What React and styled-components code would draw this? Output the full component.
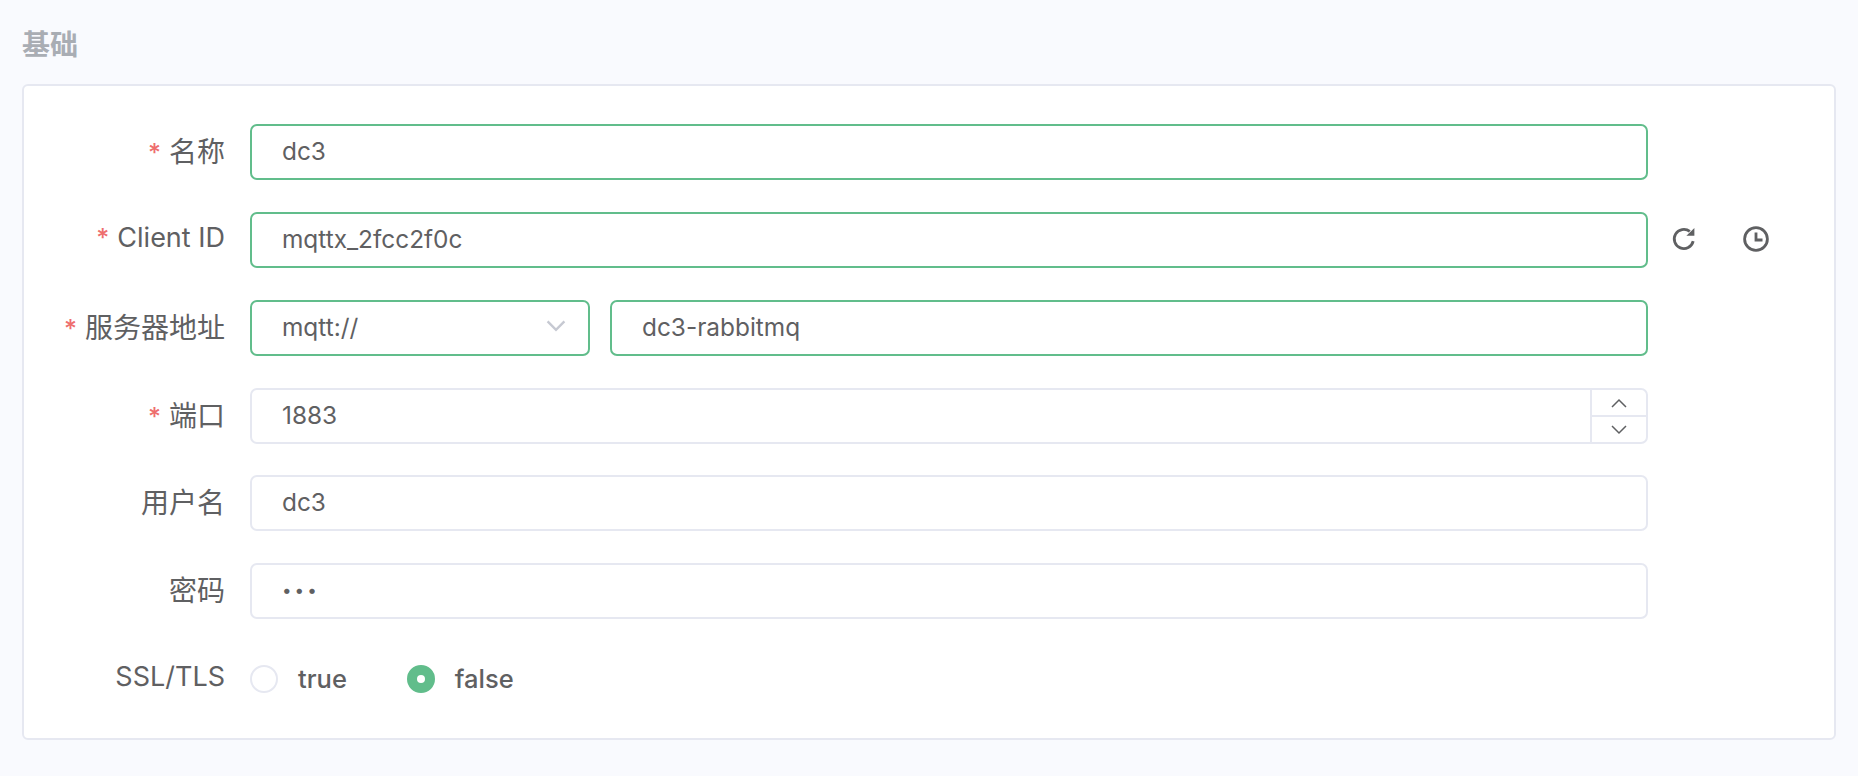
import React from "react";
import styled, { createGlobalStyle } from "styled-components";

const GREEN = "#61bd8b";
const LINE = "#e6e8f1";
const TEXT = "#5f6062";

const GlobalStyle = createGlobalStyle`
  html, body {
    margin: 0;
    height: 100%;
    overflow: hidden;
    background: #f9fafe;
  }
  body, input {
    font-family: Inter, "Noto Sans CJK SC", sans-serif;
  }
`;

const Page = styled.div`
  box-sizing: border-box;
  height: 776px;
  padding: 27px 22px 0;
`;

const Title = styled.h2`
  margin: 0 0 21px;
  font-size: 28px;
  line-height: 36px;
  font-weight: 700;
  color: #a9adb4;
`;

const Card = styled.section`
  box-sizing: border-box;
  height: 656px;
  padding: 38px 0 0;
  background: #fff;
  border: 2px solid ${LINE};
  border-radius: 6px;
`;

const Row = styled.div`
  display: flex;
  align-items: center;
  height: 56px;
  margin-bottom: ${(p) => p.$gap ?? 32}px;
`;

const Label = styled.label`
  flex: 0 0 201px;
  box-sizing: border-box;
  padding-bottom: 5px;
  text-align: right;
  font-size: ${(p) => (p.$latin ? 27 : 28)}px;
  color: ${TEXT};
  white-space: nowrap;
`;

const Star = styled.span`
  margin-right: 8px;
  font-size: 25px;
  font-weight: 500;
  color: #ee6e6e;
`;

const Control = styled.div`
  flex: 0 0 1398px;
  margin-left: 25px;
  display: flex;
  gap: 20px;
`;

const TextInput = styled.input`
  box-sizing: border-box;
  flex: 1;
  min-width: 0;
  height: 56px;
  padding: 0 30px 3px;
  font-size: ${(p) => (p.type === "password" ? 17 : 24.4)}px;
  letter-spacing: ${(p) => (p.type === "password" ? "3px" : "normal")};
  color: ${TEXT};
  background: #fff;
  border: 2px solid ${(p) => (p.$valid ? GREEN : LINE)};
  border-radius: 7px;
  outline: none;
`;

const SelectBox = styled.div`
  box-sizing: border-box;
  flex: 0 0 340px;
  height: 56px;
  padding: 0 20px 3px 30px;
  display: flex;
  align-items: center;
  justify-content: space-between;
  font-size: 24.4px;
  color: ${TEXT};
  border: 2px solid ${GREEN};
  border-radius: 7px;
`;

const NumberBox = styled.div`
  position: relative;
  flex: 1;
  display: flex;
`;

const Stepper = styled.div`
  position: absolute;
  top: 2px;
  right: 2px;
  bottom: 2px;
  width: 54px;
  display: flex;
  flex-direction: column;
  border-left: 2px solid ${LINE};
`;

const StepButton = styled.button`
  flex: 1;
  padding: 0;
  display: flex;
  align-items: center;
  justify-content: center;
  background: none;
  border: none;
  & + & {
    border-top: 2px solid ${LINE};
  }
`;

const IconActions = styled.div`
  display: flex;
  align-items: center;
  margin: -3px 0 0 23px;
  gap: 46px;
`;

const IconButton = styled.button`
  width: 26px;
  height: 26px;
  padding: 0;
  display: flex;
  background: none;
  border: none;
  color: ${TEXT};
`;

const RadioGroup = styled.div`
  display: flex;
  align-items: center;
  gap: 60px;
`;

const RadioOption = styled.span`
  display: flex;
  align-items: center;
  gap: 20px;
  font-size: 25.5px;
  font-weight: 500;
  color: ${TEXT};
`;

const RadioText = styled.span`
  padding-bottom: 2px;
`;

const RadioDot = styled.span`
  box-sizing: border-box;
  width: 28px;
  height: 28px;
  display: flex;
  align-items: center;
  justify-content: center;
  border-radius: 50%;
  background: ${(p) => (p.$on ? GREEN : "#fff")};
  border: 2px solid ${(p) => (p.$on ? GREEN : LINE)};
  &::after {
    content: "";
    display: ${(p) => (p.$on ? "block" : "none")};
    width: 8px;
    height: 8px;
    border-radius: 50%;
    background: #fff;
  }
`;

const Chevron = ({ up, size = 24, color = TEXT, width = 1.6 }) => (
  <svg width={size} height={size * 0.6} viewBox="0 0 20 12" fill="none" stroke={color} strokeWidth={width}>
    <path d={up ? "M3 10 10 3l7 7" : "M3 2l7 7 7-7"} />
  </svg>
);

const RefreshIcon = () => (
  <svg width="26" height="26" viewBox="0 0 26 26" fill="none" stroke="currentColor" strokeWidth="2.8">
    <path d="M22.2 15.2A9.6 9.6 0 1 1 18.8 5.4" />
    <path d="M15.4 9.8h8V2z" fill="currentColor" stroke="none" />
  </svg>
);

const ClockIcon = () => (
  <svg width="26" height="26" viewBox="0 0 26 26" fill="none" stroke="currentColor" strokeWidth="2.8">
    <circle cx="13" cy="13" r="11.4" />
    <path d="M13 6.5V14h6.5" />
  </svg>
);

const Required = () => <Star>*</Star>;

const App = () => {
  return (
    <Page>
      <GlobalStyle />
      <Title>基础</Title>
      <Card>
        <Row>
          <Label><Required />名称</Label>
          <Control>
            <TextInput $valid readOnly defaultValue="dc3" />
          </Control>
        </Row>
        <Row>
          <Label $latin><Required />Client ID</Label>
          <Control>
            <TextInput $valid readOnly defaultValue="mqttx_2fcc2f0c" />
          </Control>
          <IconActions>
            <IconButton><RefreshIcon /></IconButton>
            <IconButton><ClockIcon /></IconButton>
          </IconActions>
        </Row>
        <Row>
          <Label><Required />服务器地址</Label>
          <Control>
            <SelectBox>
              mqtt://
              <Chevron color="#c6c9d2" width={2} />
            </SelectBox>
            <TextInput $valid readOnly defaultValue="dc3-rabbitmq" />
          </Control>
        </Row>
        <Row $gap={31}>
          <Label><Required />端口</Label>
          <Control>
            <NumberBox>
              <TextInput readOnly defaultValue="1883" />
              <Stepper>
                <StepButton><Chevron up size={20} width={1.5} /></StepButton>
                <StepButton><Chevron size={20} width={1.5} /></StepButton>
              </Stepper>
            </NumberBox>
          </Control>
        </Row>
        <Row>
          <Label>用户名</Label>
          <Control>
            <TextInput readOnly defaultValue="dc3" />
          </Control>
        </Row>
        <Row>
          <Label>密码</Label>
          <Control>
            <TextInput type="password" readOnly defaultValue="dc3" />
          </Control>
        </Row>
        <Row>
          <Label $latin>SSL/TLS</Label>
          <Control>
            <RadioGroup>
              <RadioOption><RadioDot /><RadioText>true</RadioText></RadioOption>
              <RadioOption><RadioDot $on /><RadioText>false</RadioText></RadioOption>
            </RadioGroup>
          </Control>
        </Row>
      </Card>
    </Page>
  );
};

export default App;
